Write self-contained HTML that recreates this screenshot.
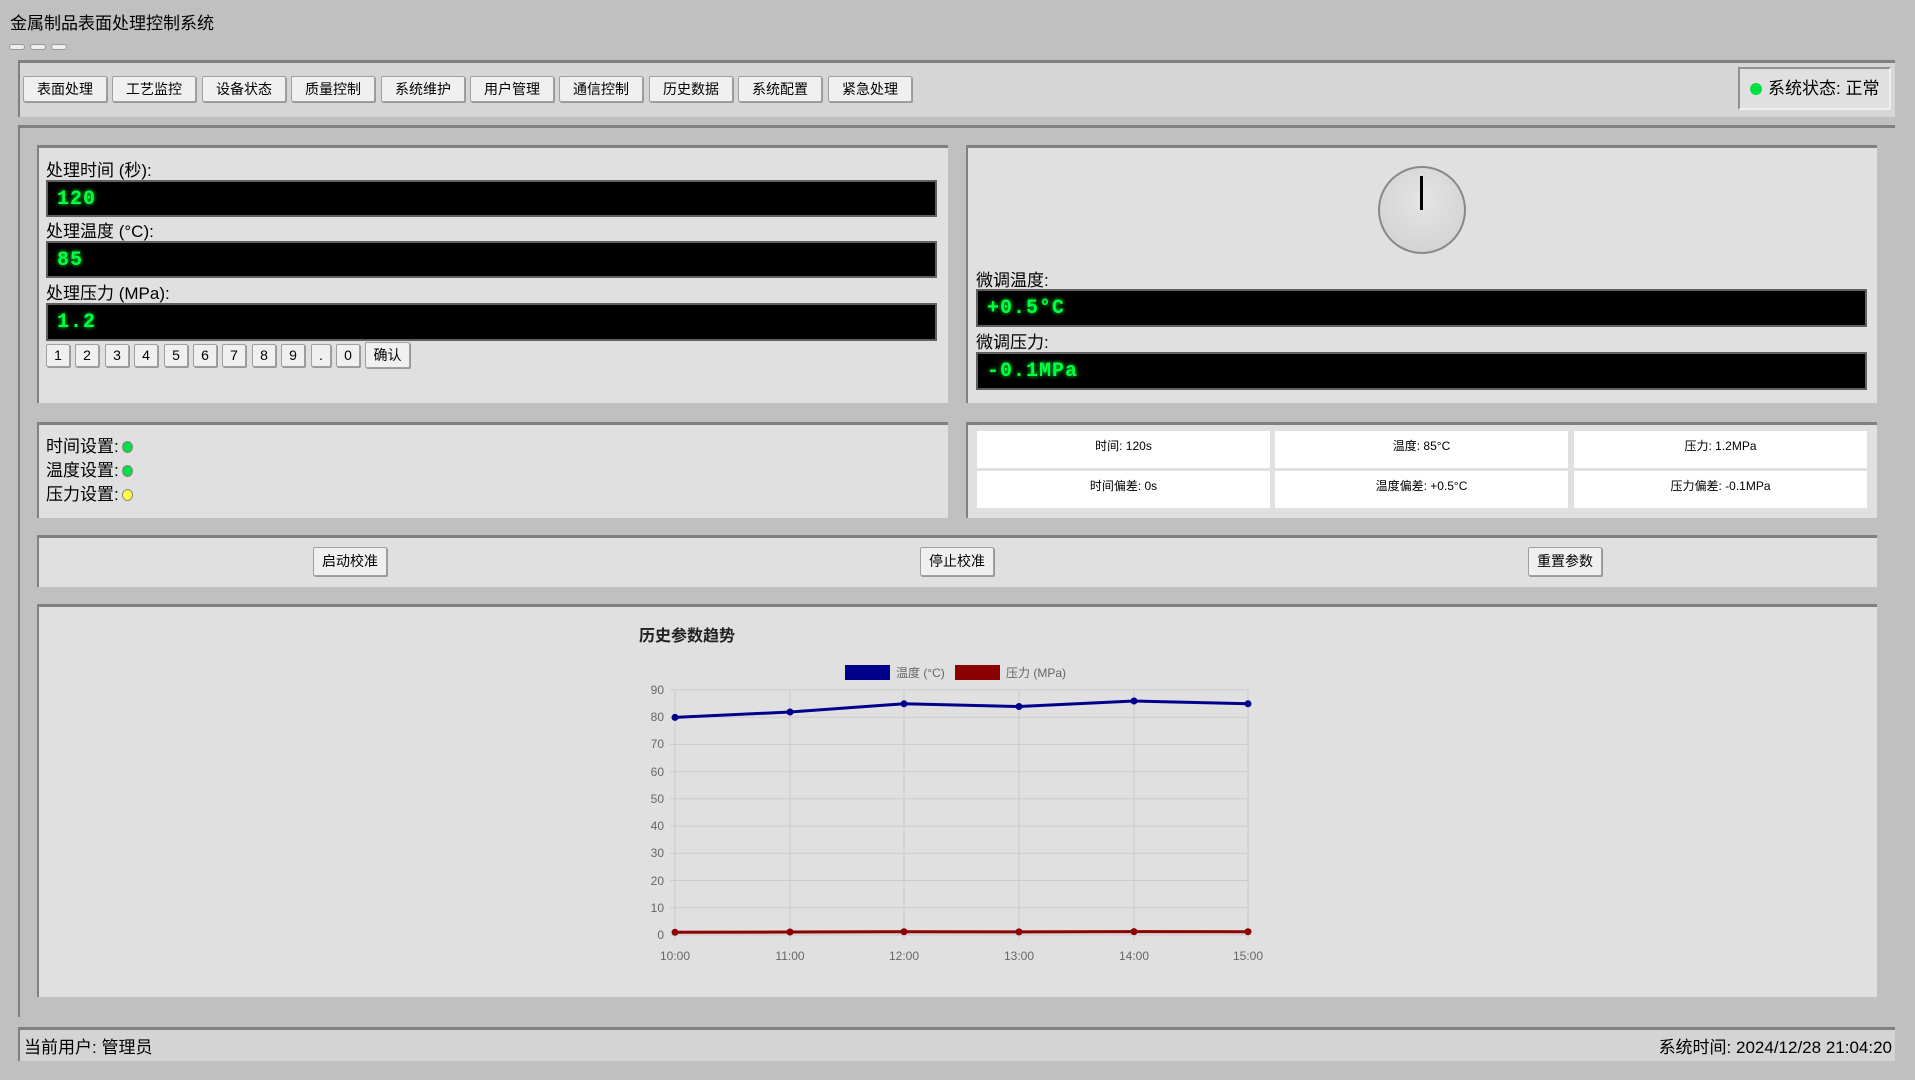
<!DOCTYPE html>
<html><head><meta charset="utf-8"><style>
*{margin:0;padding:0;box-sizing:border-box}
body{width:1915px;height:1080px;background:#c0c0c0;font-family:"Liberation Sans","Noto Sans CJK SC",sans-serif;color:#000;position:relative;overflow:hidden}
.a{position:absolute}
.panel{position:absolute;background:#e0e0e0;border-top:3px solid #808080;border-left:2px solid #808080}
.btn{position:absolute;background:#f0f0f0;border:1px solid #a0a0a0;font-size:14px;text-align:center;border-radius:2px;box-shadow:1px 1px 0 #999}
.disp{position:absolute;background:#000;border:2px solid #606060;color:#00ff40;font-family:"Liberation Mono","DejaVu Sans Mono",monospace;font-weight:bold;font-size:20px;padding-left:9px;line-height:36px;text-shadow:0 0 4px #00ff40;letter-spacing:1px}
.lbl{position:absolute;font-size:17px}
.cell{position:absolute;background:#fff;font-size:12px;text-align:center;line-height:30px;width:293px;height:37px}
.dot{display:inline-block;width:11px;height:12px;border-radius:50%;border:1px solid #888;vertical-align:-1px;margin-left:3px}
</style></head><body>
<div class="a" style="left:10px;top:9px;font-size:17px">金属制品表面处理控制系统</div>
<div class="a" style="left:9px;top:44px;width:16px;height:6px;background:#eee;border:1px solid #999;border-radius:3px"></div>
<div class="a" style="left:30px;top:44px;width:16px;height:6px;background:#eee;border:1px solid #999;border-radius:3px"></div>
<div class="a" style="left:51px;top:44px;width:16px;height:6px;background:#eee;border:1px solid #999;border-radius:3px"></div>

<div class="a" style="left:18px;top:60px;width:1877px;height:57px;background:#d6d6d6;border-top:3px solid #808080;border-left:2px solid #808080"></div>
<div class="btn" style="left:23px;top:76px;width:84px;height:26px;line-height:24px">表面处理</div>
<div class="btn" style="left:112px;top:76px;width:84px;height:26px;line-height:24px">工艺监控</div>
<div class="btn" style="left:202px;top:76px;width:84px;height:26px;line-height:24px">设备状态</div>
<div class="btn" style="left:291px;top:76px;width:84px;height:26px;line-height:24px">质量控制</div>
<div class="btn" style="left:381px;top:76px;width:84px;height:26px;line-height:24px">系统维护</div>
<div class="btn" style="left:470px;top:76px;width:84px;height:26px;line-height:24px">用户管理</div>
<div class="btn" style="left:559px;top:76px;width:84px;height:26px;line-height:24px">通信控制</div>
<div class="btn" style="left:649px;top:76px;width:84px;height:26px;line-height:24px">历史数据</div>
<div class="btn" style="left:738px;top:76px;width:84px;height:26px;line-height:24px">系统配置</div>
<div class="btn" style="left:828px;top:76px;width:84px;height:26px;line-height:24px">紧急处理</div>
<div class="a" style="left:1738px;top:67px;width:153px;height:43px;background:#e0e0e0;border:2px solid #909090;border-right-color:#eee;border-bottom-color:#eee;font-size:17px;line-height:39px;padding-left:10px"><span class="dot" style="background:#00e040;border:none;width:12px;height:12px;margin:0 6px 0 0"></span>系统状态: 正常</div>

<div class="a" style="left:18px;top:125px;width:1877px;height:892px;border-top:3px solid #808080;border-left:2px solid #808080"></div>

<div class="panel" style="left:37px;top:145px;width:911px;height:258px"></div>
<div class="lbl" style="left:46px;top:156px">处理时间 (秒):</div>
<div class="disp" style="left:46px;top:180px;width:891px;height:37px">120</div>
<div class="lbl" style="left:46px;top:217px">处理温度 (°C):</div>
<div class="disp" style="left:46px;top:241px;width:891px;height:37px">85</div>
<div class="lbl" style="left:46px;top:279px">处理压力 (MPa):</div>
<div class="disp" style="left:46px;top:303px;width:891px;height:38px">1.2</div>
<div class="btn" style="left:46px;top:344px;width:24px;height:23px;line-height:21px">1</div>
<div class="btn" style="left:75px;top:344px;width:24px;height:23px;line-height:21px">2</div>
<div class="btn" style="left:105px;top:344px;width:24px;height:23px;line-height:21px">3</div>
<div class="btn" style="left:134px;top:344px;width:24px;height:23px;line-height:21px">4</div>
<div class="btn" style="left:164px;top:344px;width:24px;height:23px;line-height:21px">5</div>
<div class="btn" style="left:193px;top:344px;width:24px;height:23px;line-height:21px">6</div>
<div class="btn" style="left:222px;top:344px;width:24px;height:23px;line-height:21px">7</div>
<div class="btn" style="left:252px;top:344px;width:24px;height:23px;line-height:21px">8</div>
<div class="btn" style="left:281px;top:344px;width:24px;height:23px;line-height:21px">9</div>
<div class="btn" style="left:311px;top:344px;width:20px;height:23px;line-height:21px">.</div>
<div class="btn" style="left:336px;top:344px;width:24px;height:23px;line-height:21px">0</div>
<div class="btn" style="left:365px;top:342px;width:45px;height:26px;line-height:24px">确认</div>

<div class="panel" style="left:966px;top:145px;width:911px;height:258px"></div>
<div class="a" style="left:1378px;top:166px;width:88px;height:88px;border-radius:50%;border:2px solid #888;background:radial-gradient(circle at 50% 40%,#e4e4e4,#cfcfcf)"></div>
<div class="a" style="left:1420px;top:176px;width:3px;height:34px;background:#000"></div>
<div class="lbl" style="left:976px;top:266px">微调温度:</div>
<div class="disp" style="left:976px;top:289px;width:891px;height:38px">+0.5°C</div>
<div class="lbl" style="left:976px;top:328px">微调压力:</div>
<div class="disp" style="left:976px;top:352px;width:891px;height:38px">-0.1MPa</div>

<div class="panel" style="left:37px;top:422px;width:911px;height:96px"></div>
<div class="lbl" style="left:46px;top:432px">时间设置:<span class="dot" style="background:#00e040"></span></div>
<div class="lbl" style="left:46px;top:456px">温度设置:<span class="dot" style="background:#00e040"></span></div>
<div class="lbl" style="left:46px;top:480px">压力设置:<span class="dot" style="background:#ffff40"></span></div>

<div class="panel" style="left:966px;top:422px;width:911px;height:96px"></div>
<div class="cell" style="left:977px;top:431px">时间: 120s</div>
<div class="cell" style="left:1275px;top:431px">温度: 85°C</div>
<div class="cell" style="left:1574px;top:431px">压力: 1.2MPa</div>
<div class="cell" style="left:977px;top:471px">时间偏差: 0s</div>
<div class="cell" style="left:1275px;top:471px">温度偏差: +0.5°C</div>
<div class="cell" style="left:1574px;top:471px">压力偏差: -0.1MPa</div>

<div class="panel" style="left:37px;top:535px;width:1840px;height:52px"></div>
<div class="btn" style="left:313px;top:547px;width:74px;height:29px;line-height:27px">启动校准</div>
<div class="btn" style="left:920px;top:547px;width:74px;height:29px;line-height:27px">停止校准</div>
<div class="btn" style="left:1528px;top:547px;width:74px;height:29px;line-height:27px">重置参数</div>

<div class="panel" style="left:37px;top:604px;width:1840px;height:393px"></div>
<svg class="a" style="left:0;top:0" width="1915" height="1080">
<text x="639" y="641" font-size="16" font-weight="bold" font-family="Liberation Sans,Noto Sans CJK SC,sans-serif" fill="#222">历史参数趋势</text>
<rect x="845" y="665" width="45" height="15" fill="#00008b"/>
<text x="896" y="677" font-size="12" fill="#666" font-family="Liberation Sans,Noto Sans CJK SC,sans-serif">温度 (°C)</text>
<rect x="955" y="665" width="45" height="15" fill="#8b0000"/>
<text x="1006" y="677" font-size="12" fill="#666" font-family="Liberation Sans,Noto Sans CJK SC,sans-serif">压力 (MPa)</text>
<g stroke="#cacaca" stroke-width="1">
<line x1="670" y1="690" x2="1248" y2="690"/><line x1="670" y1="717.2" x2="1248" y2="717.2"/><line x1="670" y1="744.4" x2="1248" y2="744.4"/><line x1="670" y1="771.7" x2="1248" y2="771.7"/><line x1="670" y1="798.9" x2="1248" y2="798.9"/><line x1="670" y1="826.1" x2="1248" y2="826.1"/><line x1="670" y1="853.3" x2="1248" y2="853.3"/><line x1="670" y1="880.6" x2="1248" y2="880.6"/><line x1="670" y1="907.8" x2="1248" y2="907.8"/><line x1="670" y1="935" x2="1248" y2="935"/>
<line x1="675" y1="690" x2="675" y2="940"/><line x1="790" y1="690" x2="790" y2="940"/><line x1="904" y1="690" x2="904" y2="940"/><line x1="1019" y1="690" x2="1019" y2="940"/><line x1="1134" y1="690" x2="1134" y2="940"/><line x1="1248" y1="690" x2="1248" y2="940"/>
</g>
<g font-size="12" fill="#666" font-family="Liberation Sans,sans-serif" text-anchor="end">
<text x="664" y="694">90</text><text x="664" y="721">80</text><text x="664" y="748">70</text><text x="664" y="776">60</text><text x="664" y="803">50</text><text x="664" y="830">40</text><text x="664" y="857">30</text><text x="664" y="885">20</text><text x="664" y="912">10</text><text x="664" y="939">0</text>
</g>
<g font-size="12" fill="#666" font-family="Liberation Sans,sans-serif" text-anchor="middle">
<text x="675" y="960">10:00</text><text x="790" y="960">11:00</text><text x="904" y="960">12:00</text><text x="1019" y="960">13:00</text><text x="1134" y="960">14:00</text><text x="1248" y="960">15:00</text>
</g>
<polyline points="675,717.4 790,712 904,703.8 1019,706.5 1134,701 1248,703.8" fill="none" stroke="#00008b" stroke-width="3"/>
<g fill="#00008b"><circle cx="675" cy="717.4" r="3.5"/><circle cx="790" cy="712" r="3.5"/><circle cx="904" cy="703.8" r="3.5"/><circle cx="1019" cy="706.5" r="3.5"/><circle cx="1134" cy="701" r="3.5"/><circle cx="1248" cy="703.8" r="3.5"/></g>
<polyline points="675,932.3 790,932 904,931.7 1019,931.9 1134,931.6 1248,931.7" fill="none" stroke="#8b0000" stroke-width="3"/>
<g fill="#8b0000"><circle cx="675" cy="932.3" r="3.5"/><circle cx="790" cy="932" r="3.5"/><circle cx="904" cy="931.7" r="3.5"/><circle cx="1019" cy="931.9" r="3.5"/><circle cx="1134" cy="931.6" r="3.5"/><circle cx="1248" cy="931.7" r="3.5"/></g>
</svg>

<div class="a" style="left:18px;top:1027px;width:1877px;height:34px;background:#d4d4d4;border-top:3px solid #808080;border-left:2px solid #808080"></div>
<div class="a" style="left:24px;top:1033px;font-size:17px">当前用户: 管理员</div>
<div class="a" style="right:23px;top:1033px;font-size:17px">系统时间: 2024/12/28 21:04:20</div>
</body></html>
